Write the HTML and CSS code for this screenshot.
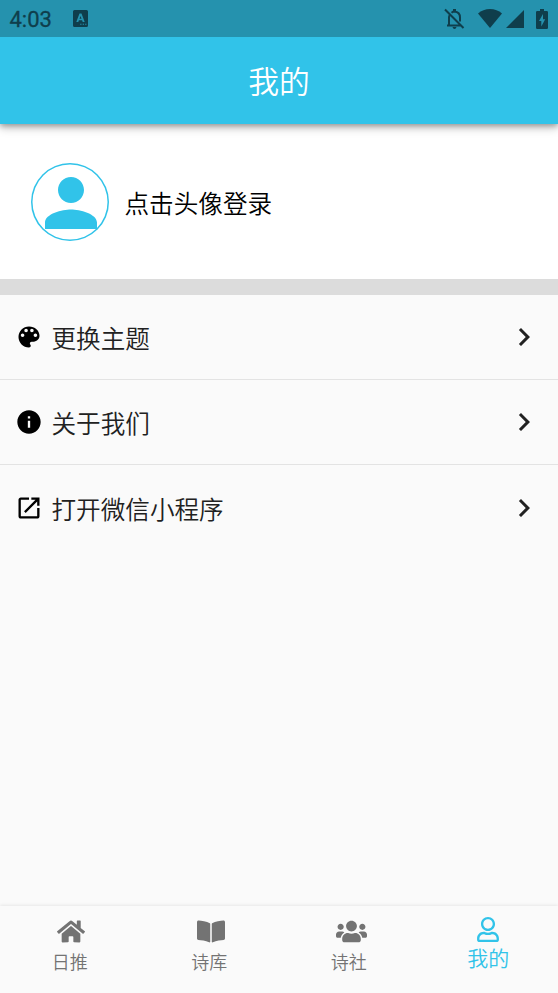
FILE: index.html
```html
<!DOCTYPE html>
<html lang="zh-CN">
<head>
<meta charset="utf-8">
<title>我的</title>
<link rel="stylesheet" href="styles.css">
</head>
<body>
<div class="app">
  <header class="header">
    <div class="status">
      <span class="time">4:03</span>
      <svg class="keyboard" viewBox="0 0 15 17"><path fill-rule="evenodd" d="M1.500 0h12Q15 0 15 1.500v14q0 1.500-1.500 1.500h-12Q0 17 0 15.500v-14Q0 0 1.500 0ZM6.500 3.500 3.300 12h2l.6-1.700h3.200l.6 1.700h2L8.500 3.500ZM7.500 6l1 2.800h-2ZM7.200 13.800v1h1.300v-1ZM9.700 13.800v1H11v-1ZM12.200 13.800v1h1.200v-1Z"/></svg>
      <span class="spacer"></span>
      <svg class="bell" viewBox="0 0 21 22"><path fill="none" stroke="#0f3e4c" stroke-width="2" d="M1 1.500 19.500 20M3 17.500h14M5 17V9.500q0-1.500.7-2.500M7.500 4.700Q9 3.500 10.500 3.500q5.500.5 5.500 6v4"/><path d="M9 1h3v3H9zM8.500 19h4q-.5 2-2 2t-2-2Z"/></svg>
      <svg class="wifi" viewBox="0 0 24 19"><path d="M12 19 0 4.500Q5 0 12 0t12 4.500Z"/></svg>
      <svg class="signal" viewBox="0 0 18 18"><path d="M18 0v18H0Z"/></svg>
      <svg class="battery" viewBox="0 0 12 20"><path fill-rule="evenodd" d="M4 0h4v2h2.700Q12 2 12 3.300v15.400q0 1.300-1.300 1.300H1.300Q0 20 0 18.700V3.300Q0 2 1.300 2H4ZM7 5l-4 7h2.300v5.500l3.900-7.200H7Z"/></svg>
    </div>
    <h1 class="title">我的</h1>
  </header>

  <section class="profile">
    <div class="avatar"><svg viewBox="0 0 24 24"><path d="M12 12c2.210 0 4-1.790 4-4s-1.790-4-4-4-4 1.790-4 4 1.790 4 4 4zm0 2c-2.670 0-8 1.340-8 4v2h16v-2c0-2.660-5.330-4-8-4z"/></svg></div>
    <span class="login">点击头像登录</span>
  </section>

  <main class="menu">
    <div class="row">
      <svg class="icon" viewBox="0 0 24 24"><path d="M12 3c-4.970 0-9 4.030-9 9s4.030 9 9 9c.83 0 1.500-.67 1.500-1.500 0-.39-.15-.74-.39-1.010-.23-.26-.38-.61-.38-.99 0-.83.67-1.500 1.500-1.500H16c2.760 0 5-2.240 5-5 0-4.420-4.030-8-9-8zm-5.500 9c-.83 0-1.500-.67-1.500-1.500S5.670 9 6.500 9 8 9.670 8 10.500 7.330 12 6.500 12zm3-4C8.670 8 8 7.330 8 6.500S8.670 5 9.500 5s1.500.67 1.500 1.500S10.330 8 9.500 8zm5 0c-.83 0-1.500-.67-1.500-1.500S13.670 5 14.500 5s1.500.67 1.500 1.500S15.330 8 14.500 8zm3 4c-.83 0-1.500-.67-1.500-1.500S16.670 9 17.500 9s1.500.67 1.500 1.500-.67 1.500-1.500 1.500z"/></svg>
      <span class="label">更换主题</span>
      <svg class="chevron" viewBox="0 0 24 24"><path d="M10 6 8.590 7.410 13.170 12l-4.580 4.590L10 18l6-6z"/></svg>
    </div>
    <div class="row">
      <svg class="icon" viewBox="0 0 24 24"><path d="M12 2C6.480 2 2 6.480 2 12s4.480 10 10 10 10-4.480 10-10S17.520 2 12 2zm1 15h-2v-6h2v6zm0-8h-2V7h2v2z"/></svg>
      <span class="label">关于我们</span>
      <svg class="chevron" viewBox="0 0 24 24"><path d="M10 6 8.590 7.410 13.170 12l-4.580 4.590L10 18l6-6z"/></svg>
    </div>
    <div class="row">
      <svg class="icon" viewBox="0 0 24 24"><path d="M19 19H5V5h7V3H5c-1.110 0-2 .9-2 2v14c0 1.100.89 2 2 2h14c1.100 0 2-.9 2-2v-7h-2v7zM14 3v2h3.590l-9.830 9.830 1.410 1.410L19 6.410V10h2V3h-7z"/></svg>
      <span class="label">打开微信小程序</span>
      <svg class="chevron" viewBox="0 0 24 24"><path d="M10 6 8.590 7.410 13.170 12l-4.580 4.590L10 18l6-6z"/></svg>
    </div>
  </main>

  <nav class="tabs">
    <div class="tab">
      <svg class="home" viewBox="0 0 576 512"><path d="M280.370 148.260L96 300.110V464a16 16 0 0 0 16 16l112.060-.29a16 16 0 0 0 15.920-16V368a16 16 0 0 1 16-16h64a16 16 0 0 1 16 16v95.640a16 16 0 0 0 16 16.050L464 480a16 16 0 0 0 16-16V300L295.670 148.260a12.190 12.190 0 0 0-15.300 0zM571.600 251.470L488 182.560V44.050a12 12 0 0 0-12-12h-56a12 12 0 0 0-12 12v72.610L318.470 43a48 48 0 0 0-61 0L4.340 251.470a12 12 0 0 0-1.600 16.900l25.500 31A12 12 0 0 0 45.150 301l235.220-193.740a12.190 12.190 0 0 1 15.300 0L530.900 301a12 12 0 0 0 16.900-1.600l25.500-31a12 12 0 0 0-1.700-16.930z"/></svg>
      <span>日推</span>
    </div>
    <div class="tab">
      <svg class="book" viewBox="0 0 576 512"><path d="M542.220 32.050c-54.800 3.110-163.720 14.430-230.960 55.590-4.640 2.840-7.270 7.890-7.270 13.170v363.870c0 11.550 12.630 18.850 23.280 13.490 69.180-34.820 169.230-44.320 218.700-46.920 16.890-.89 30.020-14.430 30.020-30.660V62.750c.01-17.710-15.350-31.740-33.770-30.700zM264.730 87.640C197.500 46.480 88.580 35.170 33.780 32.050 15.360 31.010 0 45.040 0 62.750V400.600c0 16.240 13.130 29.780 30.020 30.660 49.490 2.600 149.590 12.110 218.770 46.950 10.620 5.350 23.210-1.940 23.210-13.460V100.630c0-5.290-2.620-10.140-7.270-12.990z"/></svg>
      <span>诗库</span>
    </div>
    <div class="tab">
      <svg class="people" viewBox="0 0 640 512"><path d="M96 224c35.300 0 64-28.700 64-64s-28.700-64-64-64-64 28.700-64 64 28.700 64 64 64zm448 0c35.300 0 64-28.700 64-64s-28.700-64-64-64-64 28.700-64 64 28.700 64 64 64zm32 32h-64c-17.600 0-33.500 7.100-45.100 18.600 40.300 22.100 68.900 62 75.100 109.400h66c17.700 0 32-14.300 32-32v-32c0-35.300-28.700-64-64-64zm-256 0c61.900 0 112-50.100 112-112S381.900 32 320 32 208 82.100 208 144s50.100 112 112 112zm76.800 32h-8.300c-20.800 10-43.900 16-68.500 16s-47.600-6-68.500-16h-8.300C179.600 288 128 339.600 128 403.200V432c0 26.500 21.500 48 48 48h288c26.500 0 48-21.500 48-48v-28.800c0-63.600-51.600-115.200-115.200-115.200zm-223.700-13.400C161.500 263.100 145.600 256 128 256H64c-35.300 0-64 28.700-64 64v32c0 17.700 14.300 32 32 32h65.900c6.300-47.400 34.900-87.300 75.200-109.400z"/></svg>
      <span>诗社</span>
    </div>
    <div class="tab active">
      <svg class="user" viewBox="0 0 448 512"><path d="M313.600 304c-28.700 0-42.500 16-89.600 16-47.100 0-60.800-16-89.600-16C60.200 304 0 364.200 0 438.400V464c0 26.500 21.500 48 48 48h352c26.500 0 48-21.500 48-48v-25.600c0-74.200-60.200-134.400-134.400-134.400zM400 464H48v-25.600c0-47.600 38.800-86.400 86.400-86.400 14.600 0 38.300 16 89.600 16 51.700 0 74.900-16 89.600-16 47.600 0 86.400 38.800 86.400 86.400V464zM224 288c79.500 0 144-64.500 144-144S303.500 0 224 0 80 64.500 80 144s64.500 144 144 144zm0-240c52.900 0 96 43.100 96 96s-43.100 96-96 96-96-43.100-96-96 43.100-96 96-96z"/></svg>
      <span>我的</span>
    </div>
  </nav>
</div>
</body>
</html>
```
FILE: styles.css
```css
* { box-sizing: border-box; }
body {
  margin: 0;
  font-family: "Noto Sans CJK SC", sans-serif;
  font-weight: 350;
  background: #fafafa;
}
svg { display: block; flex: none; }
.app { height: 993px; display: flex; flex-direction: column; overflow: hidden; }

.header {
  height: 124px;
  flex: none;
  background: #31c3e9;
  box-shadow: 0 2px 5px rgba(0, 0, 0, .25), 0 4px 9px rgba(0, 0, 0, .22);
  z-index: 1;
}
.status {
  height: 37px;
  padding: 0 10px 0 9.5px;
  display: flex;
  align-items: center;
  background: #2592ae;
  color: #0f3e4c;
  fill: #0f3e4c;
}
.time { width: 43px; font: 400 22px/37px Roboto, sans-serif; -webkit-text-stroke: .3px #0f3e4c; padding-top: 2px; }
.keyboard { width: 15px; height: 17px; margin-left: 20.5px; }
.spacer { flex: 1; }
.bell { width: 21px; height: 22px; margin-right: 13px; }
.wifi { width: 24px; height: 19px; margin-right: 4px; }
.signal { width: 18px; height: 18px; margin-right: 12px; }
.battery { width: 12px; height: 20px; }
.title {
  margin: 0;
  text-align: center;
  color: #fff;
  font-size: 30.800px;
  font-weight: 350;
  line-height: 86px;
}

.profile {
  height: 171px;
  flex: none;
  padding: 0 30.5px;
  display: flex;
  align-items: center;
  gap: 16px;
  background: #fff;
  border-bottom: 16px solid #dcdcdc;
}
.avatar {
  width: 78px;
  height: 78px;
  border-radius: 50%;
  box-shadow: inset 0 0 0 1.5px #31c3e9;
}
.avatar svg { width: 78px; height: 78px; margin: 1px 0 0 1.5px; fill: #31c3e9; }
.login { color: #000; font-size: 24.600px; line-height: 36px; }

.menu { flex: 1; }
.row {
  height: 85px;
  padding: 0 16px 0 15px;
  display: flex;
  align-items: center;
  border-bottom: 1px solid #e3e3e3;
}
.row:last-child { height: 86px; border-color: transparent; }
.icon { width: 28px; height: 28px; margin-right: 8.5px; }
.label { flex: 1; color: #212121; font-size: 24.600px; line-height: 36px; }
.chevron { width: 36px; height: 36px; fill: #212121; }

.tabs {
  height: 87px;
  flex: none;
  display: flex;
  background: #fafafa;
  box-shadow: 0 -1px 3px rgba(0, 0, 0, .08);
}
.tab {
  flex: 1;
  padding-top: 12.5px;
  display: flex;
  flex-direction: column;
  align-items: center;
  color: #737373;
  fill: #737373;
  font-size: 18px;
  line-height: 26px;
}
.tab svg { height: 25px; margin-bottom: 4.5px; }
.tab .home { width: 28px; margin-left: 3px; }
.tab .book { width: 28px; margin-left: 4px; }
.tab .people { width: 31px; margin-left: 6px; }
.tab .user { width: 22px; }
.tab.active { padding-top: 11px; color: #31c3e9; fill: #31c3e9; font-size: 21px; line-height: 30px; }
.tab.active svg { margin-bottom: 0; }
```
